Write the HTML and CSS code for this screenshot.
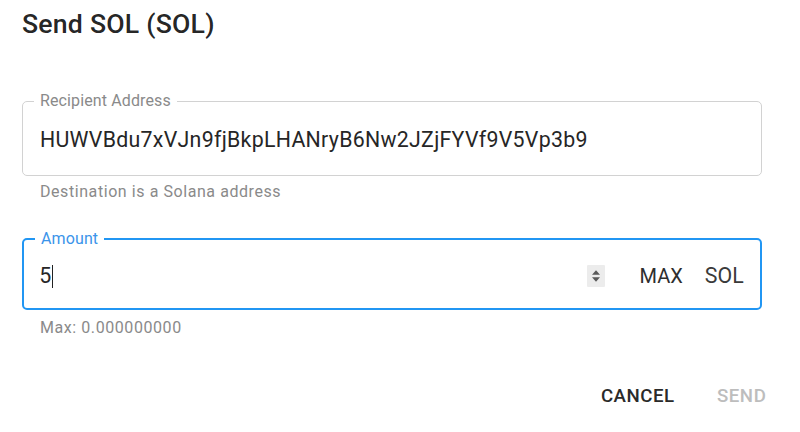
FILE: index.html
```html
<!DOCTYPE html>
<html lang="en">
<head>
<meta charset="utf-8">
<title>Send SOL (SOL)</title>
<link rel="stylesheet" href="styles.css">
</head>
<body>
<div class="dialog">
  <h2 class="title">Send SOL (SOL)</h2>
  <div class="content">
    <fieldset class="field">
      <legend class="label">Recipient Address</legend>
      <div class="input-row">
        <span class="value value-address">HUWVBdu7xVJn9fjBkpLHANryB6Nw2JZjFYVf9V5Vp3b9</span>
      </div>
    </fieldset>
    <p class="helper">Destination is a Solana address</p>

    <fieldset class="field field-focused">
      <legend class="label label-focused">Amount</legend>
      <div class="input-row">
        <span class="value value-grow"><span class="caret">5</span></span>
        <span class="spinner">
          <svg width="18" height="22" viewBox="0 0 18 22" aria-hidden="true">
            <path d="M5 9.8 L9 5.3 L13 9.8 Z" fill="#5a5a5a"/>
            <path d="M5 12.2 L9 16.7 L13 12.2 Z" fill="#5a5a5a"/>
          </svg>
        </span>
        <span class="max-btn">MAX</span>
        <span class="unit">SOL</span>
      </div>
    </fieldset>
    <p class="helper helper-amount">Max: 0.000000000</p>
  </div>
  <div class="actions">
    <span class="btn">CANCEL</span>
    <span class="btn btn-disabled">SEND</span>
  </div>
</div>
</body>
</html>
```

FILE: styles.css
```css
* {
  box-sizing: border-box;
}

html, body {
  margin: 0;
  padding: 0;
  background: #ffffff;
}

body {
  font-family: Roboto, "Liberation Sans", Arial, sans-serif;
  color: rgba(0, 0, 0, 0.87);
  width: 800px;
  height: 432px;
  overflow: hidden;
}

.dialog {
  display: flex;
  flex-direction: column;
}

.title {
  margin: 8px 0 0 0;
  padding-left: 22px;
  font-size: 26.67px;
  font-weight: 500;
  line-height: 32px;
  letter-spacing: 0.2px;
  color: rgba(0, 0, 0, 0.87);
}

.content {
  display: flex;
  flex-direction: column;
  padding: 0 38px 0 22px;
}

.field {
  margin: 53px 0 0 0;
  padding: 19px 17px 23px 17px;
  border: 1px solid #d2d2d2;
  border-radius: 5px;
  min-width: 0;
}

.label {
  margin-left: -6px;
  padding: 0 6px;
  font-size: 16px;
  line-height: 16px;
  letter-spacing: 0.12px;
  color: #8a8a8a;
}

.input-row {
  display: flex;
  align-items: center;
  height: 24px;
}

.value {
  font-size: 21.33px;
  line-height: 24px;
  color: #262626;
  white-space: nowrap;
}

.value-address {
  letter-spacing: 0.28px;
}

.value-grow {
  flex: 1;
}

.caret {
  display: inline-block;
  padding-right: 1px;
  border-right: 1.5px solid #222;
  line-height: 22px;
  height: 23px;
  margin-top: 1px;
}

.helper {
  margin: 5.5px 0 0 0;
  padding-left: 18px;
  font-size: 16px;
  line-height: 20px;
  color: #8a8a8a;
  letter-spacing: 0.57px;
}

.field-focused {
  margin-top: 29px;
  padding: 17px 15.33px 20px 15.33px;
  border: 2.67px solid #2196f3;
}

.label-focused {
  margin-left: -4.33px;
  color: #3b94ea;
}

.spinner {
  display: flex;
  width: 18px;
  height: 22px;
  margin-right: 1px;
  background: #ececec;
  border-radius: 1px;
}

.max-btn {
  margin-left: 34px;
  font-size: 20px;
  font-weight: 400;
  line-height: 24px;
  color: #2e2e2e;
}

.unit {
  margin-left: 22px;
  margin-right: 1px;
  font-size: 21.33px;
  line-height: 24px;
  color: #3a3a3a;
}

.helper-amount {
  margin-top: 8px;
}

.actions {
  display: flex;
  justify-content: flex-end;
  gap: 21px;
  padding: 0 23px 0 0;
  margin-top: 38px;
}

.btn {
  padding: 8px 10.67px;
  font-size: 18.67px;
  font-weight: 500;
  line-height: 24px;
  letter-spacing: 0.53px;
  color: #2a2a2a;
}

.btn-disabled {
  color: #bdbdbd;
}
```
